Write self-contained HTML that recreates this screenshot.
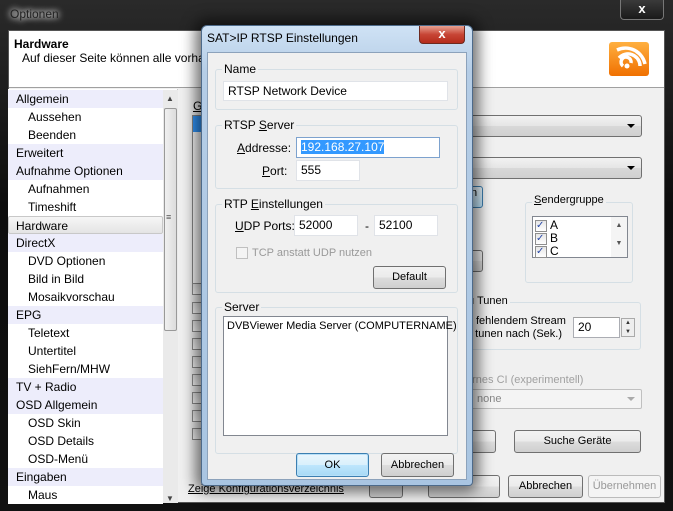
<!DOCTYPE html>
<html><head><meta charset="utf-8"><style>
*{margin:0;padding:0;box-sizing:border-box}
body{width:673px;height:511px;overflow:hidden;background:#111;font-family:"Liberation Sans",sans-serif;font-size:12px;color:#000;position:relative}
.a{position:absolute;white-space:nowrap}
.btn{position:absolute;border:1px solid #707070;border-radius:3px;background:linear-gradient(#f2f2f2 0,#ebebeb 50%,#dddddd 51%,#cfcfcf 100%);text-align:center;font-size:11px}
.inp{position:absolute;background:#fff;border:1px solid #abadb3;border-top-color:#a0a0a0;padding:2px 4px;font-size:12px}
.grp{position:absolute;border:1px solid #d5dfe5;border-radius:3px}
.gl{position:absolute;background:#f0f0f0;padding:0 2px;top:-8px;left:6px;font-size:12px}
.combo{position:absolute;border:1px solid #707070;border-radius:3px;background:linear-gradient(#f2f2f2,#e5e5e5 50%,#d8d8d8 51%,#d0d0d0)}
.arr{position:absolute;right:6px;top:8px;width:0;height:0;border-left:4px solid transparent;border-right:4px solid transparent;border-top:4px solid #000}
.li{position:absolute;left:8px;width:155px;height:18px;line-height:18px;font-size:12px}
.cat{background:#ededfb;padding-left:8px}
.sub{background:#fff;padding-left:20px}
.cb{position:absolute;width:12px;height:12px;border:1px solid #8f8f8f;background:linear-gradient(#e6e6e6,#fff)}
.s11{font-size:11px}
</style></head><body>
<div class="a" style="left:0;top:0;width:673px;height:511px;background:linear-gradient(#2a2a2a,#0d0d0d 40%,#111)"></div>
<div class="a" style="left:10px;top:7px;color:#222;font-size:12px;text-shadow:0 0 6px #fff,0 0 8px #fff">Optionen</div>
<div class="a" style="left:620px;top:0;width:44px;height:20px;border:1px solid #777;border-top:none;border-radius:0 0 4px 4px;background:linear-gradient(#3a3a3a,#1a1a1a);color:#fff;text-align:center;font-weight:bold;line-height:18px;font-size:13px">x</div>
<div class="a" style="left:8px;top:30px;width:657px;height:473px;background:#f0f0f0;border:1px solid #555"></div>
<div class="a" style="left:9px;top:31px;width:655px;height:57px;background:#fff;border-bottom:1px solid #a0a0a0"></div>
<div class="a" style="left:14px;top:37px;font-weight:bold">Hardware</div>
<div class="a" style="left:22px;top:51px">Auf dieser Seite können alle vorhand</div>
<div class="a" style="left:609px;top:42px;width:40px;height:34px;border-radius:3px;background:linear-gradient(#ffb040,#f07000);overflow:hidden">
<svg width="40" height="34" viewBox="0 0 40 34"><g fill="none" stroke="#fff" stroke-width="3.5"><path d="M14 24a5 5 0 1 1 8-3"/><path d="M10 16a12 12 0 0 1 21 8"/><path d="M8 8a20 20 0 0 1 28 14"/></g><circle cx="18" cy="24" r="2.5" fill="#fff"/></svg></div>
<div class="a" style="left:8px;top:89px;width:170px;height:414px;background:#fff;border-right:1px solid #ccc"></div>
<div class="li cat" style="top:90px">Allgemein</div>
<div class="li sub" style="top:108px">Aussehen</div>
<div class="li sub" style="top:126px">Beenden</div>
<div class="li cat" style="top:144px">Erweitert</div>
<div class="li cat" style="top:162px">Aufnahme Optionen</div>
<div class="li sub" style="top:180px">Aufnahmen</div>
<div class="li sub" style="top:198px">Timeshift</div>
<div class="li cat" style="top:216px;background:linear-gradient(#f6f6f6,#e4e4e4);border:1px solid #c8c8c8;border-radius:2px;padding-left:7px">Hardware</div>
<div class="li cat" style="top:234px">DirectX</div>
<div class="li sub" style="top:252px">DVD Optionen</div>
<div class="li sub" style="top:270px">Bild in Bild</div>
<div class="li sub" style="top:288px">Mosaikvorschau</div>
<div class="li cat" style="top:306px">EPG</div>
<div class="li sub" style="top:324px">Teletext</div>
<div class="li sub" style="top:342px">Untertitel</div>
<div class="li sub" style="top:360px">SiehFern/MHW</div>
<div class="li cat" style="top:378px">TV + Radio</div>
<div class="li cat" style="top:396px">OSD Allgemein</div>
<div class="li sub" style="top:414px">OSD Skin</div>
<div class="li sub" style="top:432px">OSD Details</div>
<div class="li sub" style="top:450px">OSD-Menü</div>
<div class="li cat" style="top:468px">Eingaben</div>
<div class="li sub" style="top:486px">Maus</div>
<div class="a" style="left:163px;top:90px;width:15px;height:413px;background:#eaeaea"></div>
<div class="a" style="left:164px;top:108px;width:13px;height:223px;background:linear-gradient(90deg,#f0f0f0,#dcdcdc);border:1px solid #999;border-radius:2px"></div>
<div class="a" style="left:166px;top:94px;font-size:8px;color:#444">▲</div>
<div class="a" style="left:166px;top:494px;font-size:8px;color:#444">▼</div>
<div class="a" style="left:166px;top:212px;font-size:9px;color:#555">≡</div>
<div class="a" style="left:193px;top:99px;text-decoration:underline">G</div>
<div class="a" style="left:192px;top:115px;width:12px;height:170px;border:1px solid #888;background:#fff"></div>
<div class="a" style="left:193px;top:116px;width:10px;height:16px;background:#3399ff"></div>
<div class="cb" style="left:192px;top:283px"></div><div class="cb" style="left:192px;top:302px"></div>
<div class="cb" style="left:192px;top:320px"></div><div class="cb" style="left:192px;top:338px"></div>
<div class="cb" style="left:192px;top:356px"></div><div class="cb" style="left:192px;top:374px"></div>
<div class="cb" style="left:192px;top:392px"></div><div class="cb" style="left:192px;top:410px"></div>
<div class="cb" style="left:192px;top:428px"></div>
<div class="a" style="left:188px;top:483px;text-decoration:underline;font-size:11px">Zeige Konfigurationsverzeichnis</div>
<div class="combo" style="left:468px;top:115px;width:174px;height:22px"><div class="arr"></div></div>
<div class="combo" style="left:468px;top:157px;width:174px;height:22px"><div class="arr"></div></div>
<div class="btn" style="left:465px;top:186px;width:18px;height:22px;border-color:#3c7fb1;background:linear-gradient(#eaf6fd,#bee6fd)">n</div>
<div class="btn" style="left:465px;top:250px;width:18px;height:22px"></div>
<div class="grp" style="left:525px;top:202px;width:108px;height:81px"><div class="gl s11" style="top:-9px"><u>S</u>endergruppe</div></div>
<div class="a" style="left:532px;top:216px;width:96px;height:42px;background:#fff;border:1px solid #828790"></div>
<div class="cb" style="left:535px;top:220px;font-size:10px;line-height:10px;color:#2a4aa8">✓</div><div class="a" style="left:550px;top:218px">A</div>
<div class="cb" style="left:535px;top:233px;font-size:10px;line-height:10px;color:#2a4aa8">✓</div><div class="a" style="left:550px;top:231px">B</div>
<div class="cb" style="left:535px;top:246px;font-size:10px;line-height:10px;color:#2a4aa8">✓</div><div class="a" style="left:550px;top:244px">C</div>
<div class="a" style="left:611px;top:217px;width:16px;height:40px;background:#f4f4f4;font-size:7px;color:#555;text-align:center;line-height:18px">▲<br>▼</div>
<div class="grp" style="left:455px;top:302px;width:186px;height:48px"></div>
<div class="a s11" style="left:466px;top:295px;background:#f0f0f0;padding:0 2px">u Tunen</div>
<div class="a s11" style="left:476px;top:315px">fehlendem Stream</div>
<div class="a s11" style="left:466px;top:328px">u tunen nach (Sek.)</div>
<div class="inp" style="left:573px;top:317px;width:47px;height:21px">20</div>
<div class="a" style="left:621px;top:318px;width:14px;height:19px;border:1px solid #aaa;background:#eee;font-size:6px;line-height:9px;text-align:center;color:#333">▲<br>▼</div>
<div class="a s11" style="left:466px;top:374px;color:#a0a0a0">ernes CI (experimentell)</div>
<div class="a s11" style="left:462px;top:389px;width:180px;height:20px;border:1px solid #c0c0c0;border-radius:2px;background:#f4f4f4;color:#888;padding:3px 14px">none<div class="arr" style="border-top-color:#aaa;top:7px"></div></div>
<div class="btn" style="left:470px;top:430px;width:26px;height:23px"></div>
<div class="btn" style="left:514px;top:430px;width:127px;height:23px;line-height:21px">Suche Geräte</div>
<div class="btn" style="left:369px;top:475px;width:34px;height:23px"></div>
<div class="btn" style="left:428px;top:475px;width:72px;height:23px"></div>
<div class="btn" style="left:508px;top:475px;width:75px;height:23px;line-height:21px">Abbrechen</div>
<div class="btn" style="left:588px;top:475px;width:73px;height:23px;line-height:21px;color:#999;border-color:#bbb;background:#f4f4f4">Übernehmen</div>
<div class="a" style="left:201px;top:25px;width:272px;height:461px;box-shadow:0 0 14px 6px rgba(0,0,0,.55);border-radius:6px"></div>
<div class="a" style="left:201px;top:25px;width:272px;height:461px;border-radius:6px 6px 4px 4px;border:1px solid #4d6a8a;background:linear-gradient(#cfe2f5,#b5cde6 10%,#a9c5e2 100%)"></div>
<div class="a" style="left:207px;top:31px;font-size:12px">SAT&gt;IP RTSP Einstellungen</div>
<div class="a" style="left:419px;top:26px;width:46px;height:18px;border:1px solid #6d2a20;border-top:none;border-radius:0 0 4px 4px;background:linear-gradient(#e8a090,#c74535 50%,#b52c1c);color:#fff;text-align:center;font-weight:bold;line-height:16px;font-size:13px">x</div>
<div class="a" style="left:207px;top:52px;width:260px;height:428px;background:#f0f0f0;border:1px solid #8ca2bb"></div>
<div class="grp" style="left:215px;top:69px;width:243px;height:41px"><div class="gl">Name</div></div>
<div class="inp" style="left:223px;top:81px;width:225px;height:20px;border-color:#e0e3e8">RTSP Network Device</div>
<div class="grp" style="left:215px;top:125px;width:243px;height:64px"><div class="gl">RTSP <u>S</u>erver</div></div>
<div class="a" style="left:237px;top:141px"><u>A</u>ddresse:</div>
<div class="inp" style="left:296px;top:137px;width:144px;height:21px;border-color:#7da2ce"><span style="background:#3399ff;color:#fff">192.168.27.107</span></div>
<div class="a" style="left:262px;top:164px"><u>P</u>ort:</div>
<div class="inp" style="left:296px;top:160px;width:64px;height:21px;border-color:#e0e3e8">555</div>
<div class="grp" style="left:215px;top:204px;width:243px;height:89px"><div class="gl">RTP <u>E</u>instellungen</div></div>
<div class="a" style="left:235px;top:219px"><u>U</u>DP Ports:</div>
<div class="inp" style="left:294px;top:215px;width:64px;height:21px;border-color:#e0e3e8">52000</div>
<div class="a" style="left:365px;top:219px">-</div>
<div class="inp" style="left:374px;top:215px;width:64px;height:21px;border-color:#e0e3e8">52100</div>
<div class="cb" style="left:236px;top:247px;border-color:#c0c0c0;background:#f4f4f4"></div>
<div class="a s11" style="left:252px;top:247px;color:#999">TCP anstatt UDP nutzen</div>
<div class="btn" style="left:373px;top:266px;width:73px;height:23px;line-height:21px">Default</div>
<div class="grp" style="left:215px;top:307px;width:243px;height:147px"><div class="gl">Server</div></div>
<div class="a s11" style="left:223px;top:316px;width:225px;height:120px;background:#fff;border:1px solid #828790;padding:3px 3px">DVBViewer Media Server (COMPUTERNAME)</div>
<div class="btn" style="left:296px;top:453px;width:73px;height:24px;line-height:22px;border-color:#3c7fb1;background:linear-gradient(#eaf6fd,#d9f0fc 50%,#bee6fd 51%,#a7d9f5);box-shadow:inset 0 0 0 1px #b8e0f8">OK</div>
<div class="btn" style="left:381px;top:453px;width:73px;height:24px;line-height:22px">Abbrechen</div>
</body></html>
